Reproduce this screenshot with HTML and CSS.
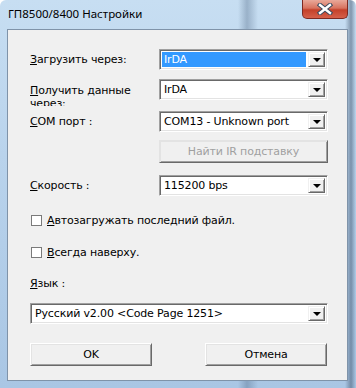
FILE: index.html
```html
<!DOCTYPE html>
<html lang="ru">
<head>
  <meta charset="UTF-8">
  <title>ГП8500/8400 Настройки</title>
  <link rel="stylesheet" href="styles.css">
</head>
<body>

<div class="okno">
  <div class="zagolovok">
    <span class="nazvanie">ГП8500/8400 Настройки</span>
    <span class="zakryt">
      <svg width="16" height="12" viewBox="0 0 16 12">
        <path d="M3 2 L13 10 M13 2 L3 10" stroke="#3a4a5e" stroke-width="4.4" stroke-linecap="square"/>
        <path d="M3 2 L13 10 M13 2 L3 10" stroke="#ffffff" stroke-width="2.4" stroke-linecap="square"/>
      </svg>
    </span>
  </div>

  <div class="klient">
    <div class="stroka s1">
      <div class="metka"><u>З</u>агрузить через:</div>
      <div class="spisok fokus"><span class="znachenie">IrDA</span><span class="strelka"></span></div>
    </div>

    <div class="stroka s2">
      <div class="metka dve"><u>П</u>олучить данные через:</div>
      <div class="spisok"><span class="znachenie">IrDA</span><span class="strelka"></span></div>
    </div>

    <div class="stroka s3">
      <div class="metka"><u>C</u>OM порт :</div>
      <div class="spisok"><span class="znachenie">COM13 - Unknown port</span><span class="strelka"></span></div>
    </div>

    <div class="stroka s4">
      <div class="metka"></div>
      <div class="knopka otkl">Найти IR подставку</div>
    </div>

    <div class="stroka s5">
      <div class="metka"><u>С</u>корость :</div>
      <div class="spisok"><span class="znachenie">115200 bps</span><span class="strelka"></span></div>
    </div>

    <div class="flazhok f1"><span class="kvadrat"></span><u>А</u>втозагружать последний файл.</div>
    <div class="flazhok f2"><span class="kvadrat"></span><u>В</u>сегда наверху.</div>

    <div class="metka yazyk"><u>Я</u>зык :</div>
    <div class="spisok shirokii"><span class="znachenie">Русский v2.00 &lt;Code Page 1251&gt;</span><span class="strelka"></span></div>

    <div class="knopki">
      <div class="knopka">OK</div>
      <div class="knopka">Отмена</div>
    </div>
  </div>
</div>

</body>
</html>
```

FILE: styles.css
```css
body {
  margin: 0;
  font-family: 'DejaVu Sans', sans-serif;
  font-size: 11px;
  letter-spacing: -0.15px;
  color: #000;
}

.okno {
  width: 356px;
  height: 388px;
  box-sizing: border-box;
  padding: 0 8px 7px 7px;
  display: flex;
  flex-direction: column;
  background:
    linear-gradient(90deg, rgba(255,255,255,0) 0, rgba(255,255,255,0) 238px, rgba(70,95,125,0.35) 247px, rgba(255,255,255,0) 258px),
    linear-gradient(90deg, rgba(255,255,255,0) 345px, rgba(60,80,105,0.5) 351px, rgba(255,255,255,0) 356px),
    linear-gradient(180deg, #c7def2 0, #b9d3ec 40%, #a9c6e4 100%);
  border-radius: 6px 6px 0 0;
}

.zagolovok {
  height: 29px;
  display: flex;
  justify-content: space-between;
  align-items: flex-start;
}

.nazvanie {
  font-family: 'Noto Sans', 'DejaVu Sans', sans-serif;
  font-size: 11.5px;
  letter-spacing: 0;
  margin: 6px 0 0 1px;
  color: #000;
}

.zakryt {
  width: 46px;
  height: 19px;
  box-sizing: border-box;
  border: 1px solid #7d2a22;
  border-top: none;
  border-radius: 0 0 5px 5px;
  background: linear-gradient(180deg, #e9a99a 0, #d8735f 45%, #c4412a 55%, #d5604a 100%);
  display: flex;
  justify-content: center;
  align-items: center;
}

.klient {
  flex: 1;
  background: #f0f0f0;
  border: 1px solid #7f93a9;
  padding: 19px 19px 0 22px;
  display: flex;
  flex-direction: column;
}

.stroka {
  display: flex;
  align-items: center;
}

.metka {
  width: 129px;
  flex-shrink: 0;
}

.s2 {
  height: 21px;
  align-items: flex-start;
  margin-top: 9px;
}

.metka.dve {
  width: 110px;
  height: 22px;
  margin: 5px 19px 0 0;
  line-height: 13px;
  overflow: hidden;
}

.s3 { margin-top: 11px; }
.s4 { margin-top: 8px; }
.s5 { margin-top: 12px; }

.spisok {
  width: 169px;
  height: 21px;
  flex-shrink: 0;
  box-sizing: border-box;
  background: #fff;
  border-top: 1px solid #a0a0a0;
  border-left: 1px solid #a0a0a0;
  border-right: 1px solid #fff;
  border-bottom: 1px solid #fff;
  box-shadow: inset 1px 1px 0 #696969, inset -1px -1px 0 #e3e3e3;
  padding: 2px;
  display: flex;
  align-items: stretch;
}

.znachenie {
  flex: 1;
  padding-left: 2px;
  line-height: 15px;
  white-space: nowrap;
  overflow: hidden;
}

.fokus .znachenie {
  background: #3399ff;
  color: #fff;
  margin-right: 2px;
}

.strelka {
  width: 17px;
  box-sizing: border-box;
  background: #f0f0f0;
  border-top: 1px solid #f0f0f0;
  border-left: 1px solid #f0f0f0;
  border-right: 1px solid #696969;
  border-bottom: 1px solid #696969;
  box-shadow: inset 1px 1px 0 #fff, inset -1px -1px 0 #a0a0a0;
  display: flex;
  justify-content: center;
  align-items: center;
}

.strelka::after {
  content: '';
  border-left: 4px solid transparent;
  border-right: 4px solid transparent;
  border-top: 4px solid #000;
  margin-top: 1px;
}

.knopka {
  height: 23px;
  box-sizing: border-box;
  background: #f0f0f0;
  border-top: 1px solid #fff;
  border-left: 1px solid #fff;
  border-right: 1px solid #696969;
  border-bottom: 1px solid #696969;
  box-shadow: inset 1px 1px 0 #e3e3e3, inset -1px -1px 0 #a0a0a0;
  display: flex;
  justify-content: center;
  align-items: center;
}

.knopka.otkl {
  width: 169px;
  color: #a0a0a0;
  border-top-color: #e3e3e3;
  border-left-color: #e3e3e3;
}

.flazhok {
  display: flex;
  align-items: center;
  height: 13px;
}

.f1 { margin-top: 18px; }
.f2 { margin-top: 19px; }

.kvadrat {
  width: 11px;
  height: 11px;
  box-sizing: border-box;
  border: 1px solid #7a7a7a;
  background: #fff;
  margin: 0 5px 0 1px;
}

.metka.yazyk {
  height: 13px;
  line-height: 13px;
  margin-top: 18px;
}

.spisok.shirokii {
  width: 298px;
  margin-top: 13px;
}

.knopki {
  display: flex;
  justify-content: space-between;
  width: 297px;
  margin-top: 19px;
}

.knopki .knopka {
  width: 122px;
}
```
